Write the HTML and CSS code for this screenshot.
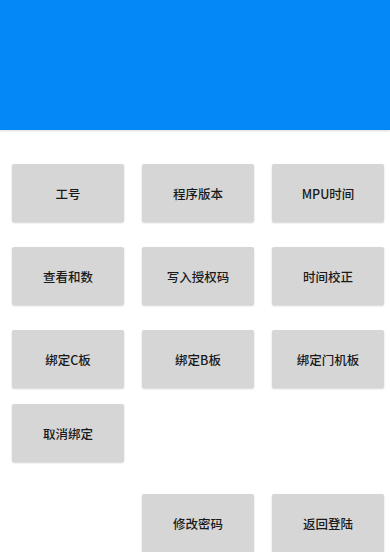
FILE: index.html
```html
<!DOCTYPE html>
<html lang="zh">
<head>
  <meta charset="UTF-8" />
  <title>设置</title>
  <link rel="stylesheet" href="styles.css">
</head>
<body>

  <div class="header"></div>

  <div class="main-content">
    <div class="row row-first">
      <button class="btn">工号</button>
      <button class="btn">程序版本</button>
      <button class="btn">MPU时间</button>
    </div>
    <div class="row">
      <button class="btn">查看和数</button>
      <button class="btn">写入授权码</button>
      <button class="btn">时间校正</button>
    </div>
    <div class="row">
      <button class="btn">绑定C板</button>
      <button class="btn">绑定B板</button>
      <button class="btn">绑定门机板</button>
    </div>
    <div class="row row-tight">
      <button class="btn">取消绑定</button>
    </div>
    <div class="row row-last">
      <button class="btn col-2">修改密码</button>
      <button class="btn">返回登陆</button>
    </div>
  </div>

</body>
</html>
```

FILE: styles.css
```css
body {
  margin: 0;
  font-family: 'Noto Sans CJK SC', 'Noto Sans', Roboto, sans-serif;
  background-color: #fff;
}

.header {
  height: 130px;
  background: #0487f7;
  box-shadow: 0 1px 2px rgba(0, 0, 0, 0.15);
}

.main-content {
  padding: 34px 6px 0 12px;
}

.row {
  display: grid;
  grid-template-columns: 112px 112px 112px;
  column-gap: 18px;
  margin-top: 25px;
}

.row-first {
  margin-top: 0;
}

.row-tight {
  margin-top: 16px;
}

.row-last {
  margin-top: 32px;
}

.btn {
  height: 58px;
  border: none;
  border-radius: 2px;
  background-color: #d6d6d6;
  color: #1a1a1a;
  font-family: inherit;
  font-size: 12.5px;
  font-weight: 500;
  padding: 0;
  box-shadow: 0 1px 2px rgba(0, 0, 0, 0.18);
}

.col-2 {
  grid-column: 2;
}
```
